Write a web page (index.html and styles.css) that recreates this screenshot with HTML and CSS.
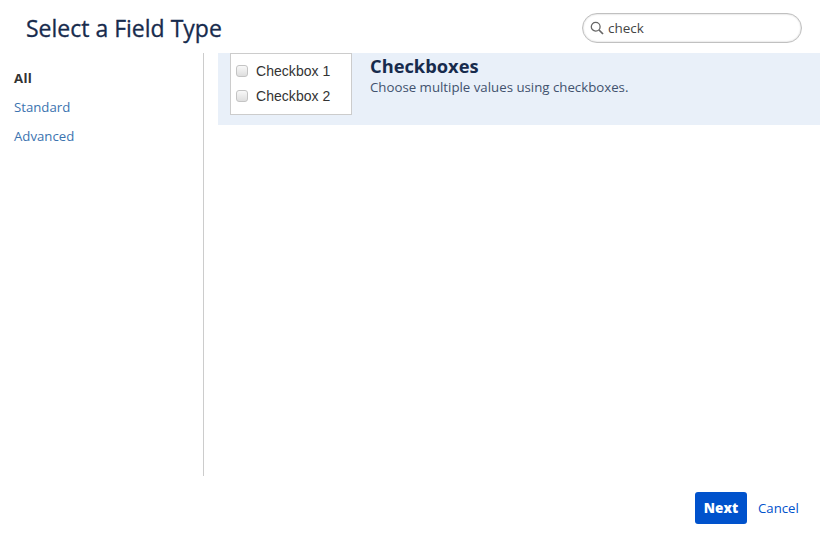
FILE: index.html
```html
<!DOCTYPE html>
<html lang="en">
<head>
<meta charset="utf-8">
<title>Select a Field Type</title>
<link rel="stylesheet" href="styles.css">
</head>
<body>
<div class="dialog">
  <header class="header">
    <h1 class="title">Select a Field Type</h1>
    <div class="search">
      <svg class="search-icon" width="14" height="14" viewBox="0 0 14 14" aria-hidden="true"><circle cx="5.7" cy="5.7" r="4.4" fill="none" stroke="#666" stroke-width="1.3"/><path d="M9 9l4 4" stroke="#666" stroke-width="1.7" fill="none"/></svg>
      <span class="search-text">check</span>
    </div>
  </header>
  <div class="body">
    <nav class="sidebar">
      <a class="nav-item active">All</a>
      <a class="nav-item">Standard</a>
      <a class="nav-item">Advanced</a>
    </nav>
    <main class="content">
      <div class="row">
        <div class="preview">
          <label class="check"><span class="box"></span>Checkbox 1</label>
          <label class="check"><span class="box"></span>Checkbox 2</label>
        </div>
        <div class="info">
          <div class="name">Checkboxes</div>
          <div class="desc">Choose multiple values using checkboxes.</div>
        </div>
      </div>
    </main>
  </div>
  <footer class="footer">
    <button class="next">Next</button>
    <a class="cancel">Cancel</a>
  </footer>
</div>
</body>
</html>
```
FILE: styles.css
```css
* { box-sizing: border-box; }
html, body { margin: 0; padding: 0; background: #fff; }
body { font-family: "Open Sans", sans-serif; width: 823px; height: 534px; overflow: hidden; }
.dialog { display: flex; flex-direction: column; height: 534px; }
.header { height: 53px; display: flex; align-items: flex-start; justify-content: space-between; padding: 13px 21px 0 26px; }
.title { margin: 0; font-size: 23px; font-weight: 400; line-height: 31px; color: #172b4d; -webkit-text-stroke: 0.3px #172b4d; }
.search { width: 220px; height: 30px; border: 1px solid #c0c0c0; border-radius: 15px; box-shadow: inset 0 0 2px rgba(0,0,0,.25); display: flex; align-items: center; padding-left: 7px; }
.search-icon { margin-right: 4px; }
.search-text { font-size: 13.5px; color: #444; }
.body { height: 423px; display: flex; }
.sidebar { width: 204px; border-right: 1px solid #ccc; padding-top: 11px; display: flex; flex-direction: column; }
.nav-item { font-size: 13.2px; line-height: 29px; padding-left: 14px; color: #3b73af; }
.nav-item.active { letter-spacing: 0.3px; font-weight: 700; color: #333; }
.content { flex: 1; padding: 0 3px 0 14px; }
.row { height: 72px; background: #e9f0f9; padding-left: 12px; display: flex; align-items: flex-start; }
.preview { width: 122px; height: 62px; background: #fff; border: 1px solid #ccc; padding-top: 4px; }
.check { display: flex; align-items: center; height: 25px; font-family: "Liberation Sans", sans-serif; font-size: 14px; letter-spacing: 0.04px; color: #333; padding-left: 5px; }
.box { width: 12px; height: 12px; margin-right: 8px; border: 1px solid #c4c4c4; border-radius: 3px; background: linear-gradient(#f8f8f8, #dedede); }
.info { padding: 0 0 0 18px; }
.name { font-size: 18.3px; font-weight: 700; line-height: 25px; color: #172b4d; }
.desc { font-size: 13.25px; line-height: 18px; color: #42526e; }
.footer { flex: 1; display: flex; justify-content: flex-end; align-items: flex-start; padding: 16px 24px 0 0; }
.next { width: 52px; height: 32px; border: 0; border-radius: 3px; background: #0052cc; color: #fff; font-family: "Open Sans", sans-serif; font-weight: 800; font-size: 13.5px; padding: 0; }
.cancel { margin-left: 11px; width: 41px; font-size: 13.2px; line-height: 32px; color: #0052cc; }
```
